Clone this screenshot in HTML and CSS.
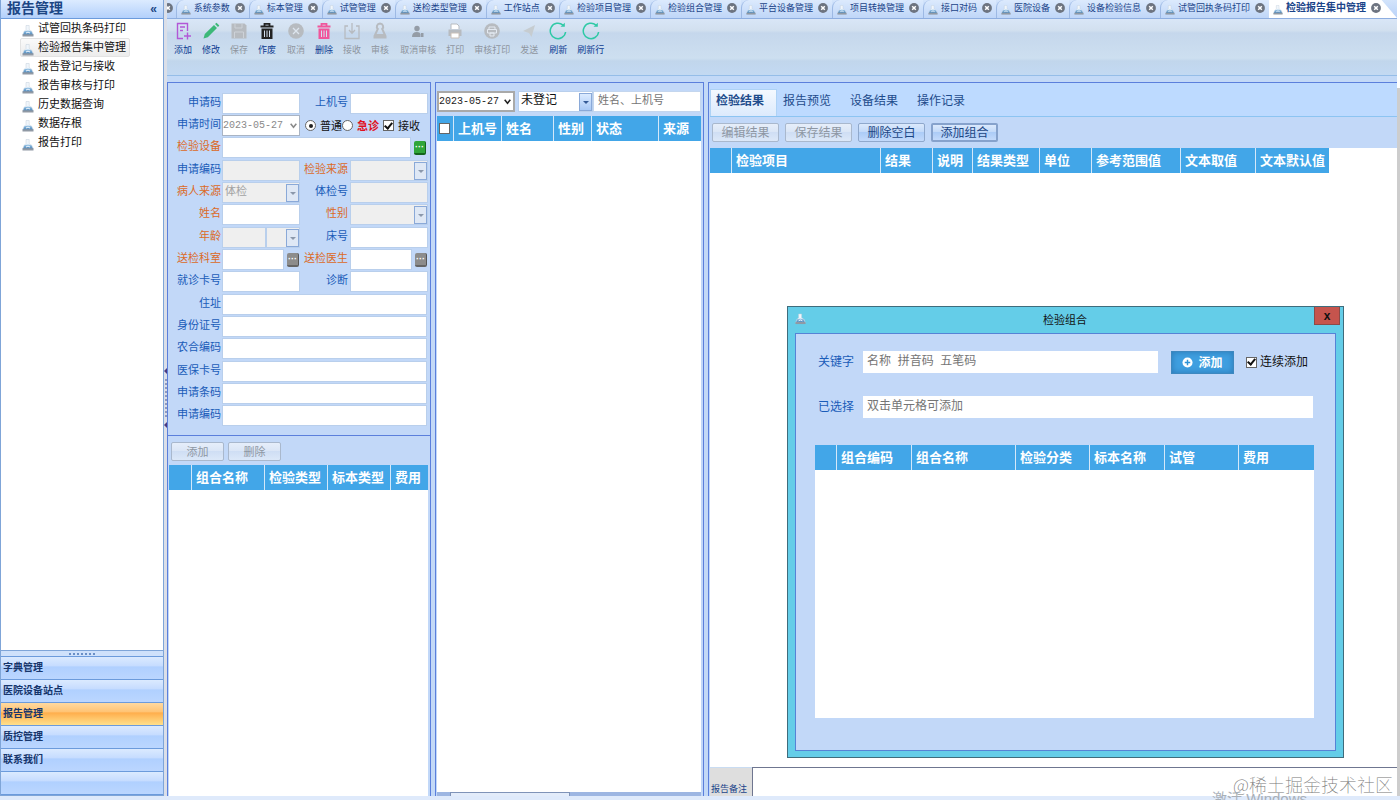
FILE: index.html
```html
<!DOCTYPE html>
<html lang="zh-CN">
<head>
    <meta charset="UTF-8">
    <meta name="viewport" content="width=device-width, initial-scale=1.0">
    <title>检验报告集中管理</title>
    <link rel="stylesheet" href="styles.css">
</head>
<body>
    <!-- shared icons -->
    <svg class="sprite" width="0" height="0">
        <defs>
            <linearGradient id="liquid" x1="0" y1="0" x2="0" y2="1">
                <stop offset="0" stop-color="#a4cdec"/>
                <stop offset="1" stop-color="#4580b4"/>
            </linearGradient>
        </defs>
        <symbol id="flask" viewBox="0 0 12 12">
            <path d="M4 .5h3.200v4L10 6.500 11.300 10H.7L2 6.500l2-2z" fill="#f1f6fb" stroke="#c3cedb" stroke-width=".5"/>
            <path d="M2.300 6.300Q6 4.500 9.500 6.300L11 10H1z" fill="url(#liquid)"/>
            <path d="M.5 9.300h11v2.200H.5z" fill="#9099a4"/>
            <path d="M4 8q2-1.800 4 0" fill="none" stroke="#eef7ff" stroke-width="1"/>
        </symbol>
        <symbol id="close" viewBox="0 0 10 10">
            <circle cx="5" cy="5" r="4.900" fill="#6d7480"/>
            <path d="M3.200 3.200l3.600 3.600M6.800 3.200L3.200 6.800" stroke="#fff" stroke-width="1.500"/>
        </symbol>
        <symbol id="trash" viewBox="0 0 18 18">
            <path d="M2.500 4.500h13M6.500 4V1.800h5V4" fill="none" stroke="currentColor" stroke-width="1.800"/>
            <path d="M3.500 6.500h11V17h-11z" fill="currentColor"/>
            <path d="M6.500 8.500v6.500M9 8.500v6.500M11.500 8.500v6.500" stroke="#d5e1f0" stroke-width="1"/>
        </symbol>
        <symbol id="refresh" viewBox="0 0 18 18">
            <path d="M14 3.100A7.700 7.700 0 1 0 16.600 10" fill="none" stroke="currentColor" stroke-width="1.500"/>
            <path d="M11.500 4.800h4.300V.8z" fill="currentColor"/>
        </symbol>
        <symbol id="chevron" viewBox="0 0 8 8">
            <path d="M1.500 2.500L4 5.500l2.500-3" fill="none" stroke="currentColor" stroke-width="1.400"/>
        </symbol>
    </svg>

    <div class="app">
        <aside class="sidebar">
            <header class="sidebar-title"><span>报告管理</span><button class="collapse" type="button">«</button></header>
            <ul class="tree">
                <li><a href="#"><svg><use href="#flask"/></svg>试管回执条码打印</a></li>
                <li><a href="#" class="selected"><svg><use href="#flask"/></svg>检验报告集中管理</a></li>
                <li><a href="#"><svg><use href="#flask"/></svg>报告登记与接收</a></li>
                <li><a href="#"><svg><use href="#flask"/></svg>报告审核与打印</a></li>
                <li><a href="#"><svg><use href="#flask"/></svg>历史数据查询</a></li>
                <li><a href="#"><svg><use href="#flask"/></svg>数据存根</a></li>
                <li><a href="#"><svg><use href="#flask"/></svg>报告打印</a></li>
            </ul>
            <div class="grip"><i></i></div>
            <nav class="groups">
                <button type="button">字典管理</button>
                <button type="button">医院设备站点</button>
                <button type="button" class="active">报告管理</button>
                <button type="button">质控管理</button>
                <button type="button">联系我们</button>
                <div class="groups-foot"></div>
            </nav>
        </aside>

        <div class="splitter"><b></b><i></i><b></b></div>

        <main class="main">
            <nav class="tabs">
                <span class="tab-cut"><svg><use href="#close"/></svg></span>
                <a href="#" class="tab"><svg><use href="#flask"/></svg>系统参数<svg class="x"><use href="#close"/></svg></a>
                <a href="#" class="tab"><svg><use href="#flask"/></svg>标本管理<svg class="x"><use href="#close"/></svg></a>
                <a href="#" class="tab"><svg><use href="#flask"/></svg>试管管理<svg class="x"><use href="#close"/></svg></a>
                <a href="#" class="tab"><svg><use href="#flask"/></svg>送检类型管理<svg class="x"><use href="#close"/></svg></a>
                <a href="#" class="tab"><svg><use href="#flask"/></svg>工作站点<svg class="x"><use href="#close"/></svg></a>
                <a href="#" class="tab"><svg><use href="#flask"/></svg>检验项目管理<svg class="x"><use href="#close"/></svg></a>
                <a href="#" class="tab"><svg><use href="#flask"/></svg>检验组合管理<svg class="x"><use href="#close"/></svg></a>
                <a href="#" class="tab"><svg><use href="#flask"/></svg>平台设备管理<svg class="x"><use href="#close"/></svg></a>
                <a href="#" class="tab"><svg><use href="#flask"/></svg>项目转换管理<svg class="x"><use href="#close"/></svg></a>
                <a href="#" class="tab"><svg><use href="#flask"/></svg>接口对码<svg class="x"><use href="#close"/></svg></a>
                <a href="#" class="tab"><svg><use href="#flask"/></svg>医院设备<svg class="x"><use href="#close"/></svg></a>
                <a href="#" class="tab"><svg><use href="#flask"/></svg>设备检验信息<svg class="x"><use href="#close"/></svg></a>
                <a href="#" class="tab"><svg><use href="#flask"/></svg>试管回执条码打印<svg class="x"><use href="#close"/></svg></a>
                <a href="#" class="tab current"><svg><use href="#flask"/></svg>检验报告集中管理<svg class="x"><use href="#close"/></svg></a>
            </nav>

            <div class="toolbar">
                <div class="tool-group">
                    <button type="button"><svg class="purple" viewBox="0 0 18 18"><path d="M9 16.500H3.500v-15h10V9M6 5h5M6 8.500h3M13.500 10.500v7M10 14h7" fill="none" stroke="currentColor" stroke-width="1.400"/></svg>添加</button>
                    <button type="button"><svg class="green" viewBox="0 0 18 18"><path d="M1.500 16.500l1.300-4.500L12 3l3 3-9.200 9.200zM13 2l1.500-1.300 2.800 2.800L16 5z" fill="currentColor"/></svg>修改</button>
                    <button type="button" disabled><svg viewBox="0 0 18 18"><path d="M1.500 1.500h13l2 2v13h-15z" fill="currentColor"/><path d="M5 2v4h7V2M4.500 16v-6h9v6" fill="none" stroke="#cdd2d8" stroke-width="1"/></svg>保存</button>
                    <button type="button"><svg class="black"><use href="#trash"/></svg>作废</button>
                </div>
                <div class="tool-group">
                    <button type="button" disabled><svg viewBox="0 0 18 18"><circle cx="9" cy="9" r="7.800" fill="currentColor"/><path d="M6 6l6 6M12 6l-6 6" stroke="#dde5ee" stroke-width="1.300"/></svg>取消</button>
                    <button type="button"><svg class="pink"><use href="#trash"/></svg>删除</button>
                    <button type="button" disabled><svg viewBox="0 0 18 18"><path d="M5 4H2v12.500h14V4h-3M9 1v10M6 8l3 3.200L12 8" fill="none" stroke="currentColor" stroke-width="1.300"/></svg>接收</button>
                    <button type="button" disabled><svg viewBox="0 0 18 18"><path d="M9 1.500a3.200 3.200 0 0 1 2.200 5.500L14 13H4l2.800-6A3.200 3.200 0 0 1 9 1.500z" fill="none" stroke="currentColor" stroke-width="2"/><path d="M2.500 14h13v2.500h-13z" fill="currentColor"/></svg>审核</button>
                </div>
                <div class="tool-group">
                    <button type="button" disabled><svg class="dark" viewBox="0 0 18 18"><circle cx="8" cy="6.500" r="2.700" fill="currentColor"/><path d="M3 15q0-5 5-5 3 0 3.500 2v3zM12 11h2.500v4H12z" fill="currentColor"/></svg>取消审核</button>
                    <button type="button" disabled><svg viewBox="0 0 18 18"><path d="M5 7V2h6l2 2v3" fill="#fff" stroke="currentColor"/><path d="M2.500 7.500h13V14h-13z" fill="currentColor"/><path d="M5 11h8v5H5z" fill="#fff" stroke="#c9bfb8"/></svg>打印</button>
                    <button type="button" disabled><svg viewBox="0 0 18 18"><circle cx="9" cy="9" r="7.800" fill="currentColor"/><path d="M6 7V5h6v2M4.500 7.500h9V11h-9zM7 11h4v3H7z" fill="none" stroke="#e4eaf2"/></svg>审核打印</button>
                    <button type="button" disabled><svg class="pale" viewBox="0 0 18 18"><path d="M3 9l12-6-3.500 12-2.500-4zM8 11l5-6" fill="currentColor"/></svg>发送</button>
                </div>
                <div class="tool-group">
                    <button type="button"><svg class="teal"><use href="#refresh"/></svg>刷新</button>
                    <button type="button"><svg class="teal"><use href="#refresh"/></svg>刷新行</button>
                </div>
            </div>

            <div class="workspace">
                <!-- request form -->
                <section class="panel request">
                    <form class="form">
                        <div class="rows">
                            <div class="row">
                                <label for="code">申请码</label><input id="code" type="text">
                                <label for="machine">上机号</label><input id="machine" type="text">
                            </div>
                            <div class="row">
                                <label for="time">申请时间</label>
                                <span class="date off"><input id="time" type="text" value="2023-05-27" disabled><svg><use href="#chevron"/></svg></span>
                                <span class="marks">
                                    <label><input type="radio" name="urgency" checked>普通</label>
                                    <label class="urgent"><input type="radio" name="urgency">急诊</label>
                                    <label><input type="checkbox" checked>接收</label>
                                </span>
                            </div>
                            <div class="row wide">
                                <label class="must" for="device">检验设备</label>
                                <span class="lookup"><input id="device" type="text"><button type="button" class="more on" aria-label="选择">···</button></span>
                            </div>
                        </div>
                        <div class="rows">
                            <div class="row">
                                <label for="apply1">申请编码</label><input id="apply1" type="text" disabled>
                                <label class="must" for="source">检验来源</label><span class="combo off"><select id="source" disabled></select></span>
                            </div>
                            <div class="row">
                                <label class="must" for="patient">病人来源</label><span class="combo off"><select id="patient" disabled><option>体检</option></select></span>
                                <label for="exam">体检号</label><input id="exam" type="text" disabled>
                            </div>
                            <div class="row">
                                <label class="must" for="name">姓名</label><input id="name" type="text">
                                <label class="must" for="sex">性别</label><span class="combo off"><select id="sex" disabled></select></span>
                            </div>
                        </div>
                        <div class="rows">
                            <div class="row">
                                <label class="must" for="age">年龄</label>
                                <span class="age"><input id="age" type="text" disabled><span class="combo off"><select aria-label="年龄" disabled></select></span></span>
                                <label for="bed">床号</label><input id="bed" type="text">
                            </div>
                            <div class="row">
                                <label class="must" for="dept">送检科室</label><span class="lookup"><input id="dept" type="text"><button type="button" class="more" aria-label="选择">···</button></span>
                                <label class="must" for="doctor">送检医生</label><span class="lookup"><input id="doctor" type="text"><button type="button" class="more" aria-label="选择">···</button></span>
                            </div>
                            <div class="row">
                                <label for="card">就诊卡号</label><input id="card" type="text">
                                <label for="diag">诊断</label><input id="diag" type="text">
                            </div>
                        </div>
                        <div class="rows">
                            <div class="row wide"><label for="addr">住址</label><input id="addr" type="text"></div>
                            <div class="row wide"><label for="idno">身份证号</label><input id="idno" type="text"></div>
                            <div class="row wide"><label for="rural">农合编码</label><input id="rural" type="text"></div>
                        </div>
                        <div class="rows">
                            <div class="row wide"><label for="insure">医保卡号</label><input id="insure" type="text"></div>
                            <div class="row wide"><label for="barcode">申请条码</label><input id="barcode" type="text"></div>
                            <div class="row wide"><label for="apply2">申请编码</label><input id="apply2" type="text"></div>
                        </div>
                    </form>
                    <div class="combos">
                        <div class="combo-buttons">
                            <button type="button" class="btn" disabled>添加</button>
                            <button type="button" class="btn" disabled>删除</button>
                        </div>
                        <div class="sheet">
                            <table class="grid grid-combos">
                                <thead><tr><th></th><th>组合名称</th><th>检验类型</th><th>标本类型</th><th>费用</th></tr></thead>
                            </table>
                        </div>
                    </div>
                </section>

                <!-- patient list -->
                <section class="panel queue">
                    <div class="filters">
                        <span class="date"><input type="text" value="2023-05-27" aria-label="日期"><svg><use href="#chevron"/></svg></span>
                        <span class="combo"><select aria-label="状态"><option>未登记</option></select></span>
                        <input type="text" placeholder="姓名、上机号" aria-label="姓名、上机号">
                    </div>
                    <div class="sheet">
                        <table class="grid grid-queue">
                            <thead><tr><th><input type="checkbox" aria-label="全选"></th><th>上机号</th><th>姓名</th><th>性别</th><th>状态</th><th>来源</th></tr></thead>
                        </table>
                    </div>
                    <div class="hscroll"><i></i></div>
                </section>

                <!-- results -->
                <section class="panel results">
                    <nav class="subtabs">
                        <a href="#" class="current">检验结果</a>
                        <a href="#">报告预览</a>
                        <a href="#">设备结果</a>
                        <a href="#">操作记录</a>
                    </nav>
                    <div class="actions">
                        <button type="button" class="btn" disabled>编辑结果</button>
                        <button type="button" class="btn" disabled>保存结果</button>
                        <button type="button" class="btn">删除空白</button>
                        <button type="button" class="btn focus">添加组合</button>
                    </div>
                    <div class="sheet">
                        <table class="grid grid-results">
                            <thead><tr><th></th><th>检验项目</th><th>结果</th><th>说明</th><th>结果类型</th><th>单位</th><th>参考范围值</th><th>文本取值</th><th>文本默认值</th></tr></thead>
                        </table>
                    </div>
                    <div class="remark">
                        <label for="remark">报告备注</label>
                        <textarea id="remark"></textarea>
                    </div>
                </section>
            </div>
        </main>
        <div class="edge"></div>
    </div>
    <footer class="status"></footer>

    <div class="dialog" role="dialog" aria-labelledby="dialog-title">
        <header class="dialog-bar">
            <svg><use href="#flask"/></svg>
            <h2 id="dialog-title">检验组合</h2>
            <button type="button" class="dialog-close">x</button>
        </header>
        <div class="dialog-body">
            <div class="line">
                <label for="keyword">关键字</label>
                <input id="keyword" type="text" placeholder="名称  拼音码  五笔码">
                <button type="button" class="add"><svg viewBox="0 0 12 12"><circle cx="6" cy="6" r="5.500" fill="#fff"/><path d="M6 3v6M3 6h6" stroke="#2f93d6" stroke-width="1.600"/></svg>添加</button>
                <label class="again"><input type="checkbox" checked>连续添加</label>
            </div>
            <div class="line">
                <label for="picked">已选择</label>
                <input id="picked" type="text" placeholder="双击单元格可添加">
            </div>
            <div class="sheet">
                <table class="grid grid-dialog">
                    <thead><tr><th></th><th>组合编码</th><th>组合名称</th><th>检验分类</th><th>标本名称</th><th>试管</th><th>费用</th></tr></thead>
                </table>
            </div>
        </div>
    </div>

    <div class="watermark">@稀土掘金技术社区</div>
    <div class="activate">激活 Windows</div>
</body>
</html>
```

FILE: styles.css
```css
* {
    box-sizing: border-box;
}
body {
    margin: 0;
    height: 100vh;
    display: flex;
    flex-direction: column;
    overflow: hidden;
    position: relative;
    background: #dfeafb;
    color: #111;
    font-family: "Liberation Sans", "Noto Sans CJK SC", sans-serif;
    font-size: 11px;
}
input, select, button, textarea {
    margin: 0;
    padding: 0;
    border: 0;
    border-radius: 0;
    font: inherit;
    color: inherit;
    background: none;
    outline: none;
}
a {
    color: inherit;
    text-decoration: none;
}
.sprite {
    position: absolute;
}
.app {
    flex: 1;
    min-height: 0;
    display: flex;
    background: #fff;
}
.status {
    height: 4px;
    background: #dfeafb;
}
.edge {
    width: 3px;
    margin-top: 88px;
    background: #cdcdcd;
}

/* sidebar */
.sidebar {
    width: 164px;
    display: flex;
    flex-direction: column;
    border: 1px solid #7fa5d8;
    border-top: 0;
    background: #fff;
}
.sidebar-title {
    height: 19px;
    padding: 0 6px;
    display: flex;
    justify-content: space-between;
    border-bottom: 1px solid #6c9bdc;
    background: linear-gradient(#dcebff, #b3d0fb);
    color: #1c4684;
    font-size: 14px;
    font-weight: bold;
    line-height: 16px;
}
.collapse {
    font-size: 12px;
    font-weight: bold;
}
.tree {
    flex: 1;
    margin: 0;
    padding: 0 0 0 19px;
    list-style: none;
}
.tree li {
    height: 19px;
}
.tree a {
    display: inline-flex;
    align-items: center;
    gap: 4px;
    height: 19px;
    padding: 0 3px 0 1px;
    border: 1px solid transparent;
    line-height: 17px;
}
.tree a.selected {
    border-color: #e3e3e3;
    border-radius: 2px;
    background: linear-gradient(#fafafa, #ececec);
}
.tree svg {
    width: 12px;
    height: 12px;
    margin-top: 4px;
}
.grip {
    height: 6px;
    display: flex;
    justify-content: center;
    align-items: center;
    border-top: 1px solid #7fa5d8;
    background: #cfe1fb;
}
.grip i {
    width: 26px;
    border-top: 2px dotted #6a8fc6;
}
.groups button, .groups-foot {
    display: block;
    width: 100%;
    height: 23px;
    padding: 0 2px;
    border-top: 1px solid #6c9bdc;
    background: linear-gradient(#dbeaff 0, #c6dcff 40%, #b0d0ff 45%, #bbd6ff 100%);
    color: #16356b;
    font-size: 10px;
    font-weight: bold;
    line-height: 20px;
    text-align: left;
}
.groups button.active {
    background: linear-gradient(#ffd9a0 0, #ffc374 40%, #ffae4c 45%, #ffe08c 100%);
}
.groups-foot {
    height: 24px;
    border-bottom: 1px solid #6c9bdc;
}
.splitter {
    width: 3px;
    display: flex;
    flex-direction: column;
    align-items: center;
    justify-content: center;
    gap: 5px;
    background: #dbdfe8;
}
.splitter b {
    border: 3px solid transparent;
    border-left: 0;
    border-right-color: #4a3a80;
}
.splitter i {
    height: 38px;
    border-left: 2px dotted #8f9ac0;
}

/* document tabs */
.main {
    flex: 1;
    min-width: 0;
    display: flex;
    flex-direction: column;
    background: #c3d9f7;
}
.tabs {
    height: 19px;
    display: flex;
    overflow: hidden;
    border-bottom: 1px solid #8eaee0;
    background: linear-gradient(#d3e4fb, #b9d2f8);
}
.tab-cut {
    width: 9px;
    padding-top: 3px;
    overflow: hidden;
}
.tab-cut svg, .tab svg.x {
    width: 10px;
    height: 10px;
    margin: 1px 0 0 5px;
}
.tab-cut svg {
    margin: 0 0 0 -4px;
}
.tab {
    flex: none;
    display: flex;
    align-items: center;
    height: 18px;
    padding: 0 4px 3px;
    border-left: 1px solid #9db9e4;
    border-radius: 8px 0 0 0;
    background: linear-gradient(#dceafd, #bfd6f8);
    color: #1b4489;
    font-size: 9px;
    line-height: 14px;
}
.tab svg {
    width: 10px;
    height: 10px;
    margin: 5px 3px 0 0;
}
.tab.current {
    padding-right: 16px;
    border: 0;
    border-radius: 0;
    background: #fff;
    clip-path: polygon(0 0, 88% 0, 100% 100%, 0 100%);
    font-size: 10px;
    font-weight: bold;
}

/* toolbar */
.toolbar {
    height: 57px;
    padding: 3px 7px 0;
    display: flex;
    gap: 11px;
    border-bottom: 1px solid #95bde8;
    background: linear-gradient(#d9e6f7 0, #d2e0ef 20%, #c5d7ec 25%, #cddff0 70%, #c1d6ec 75%, #c3d9f2 100%);
}
.tool-group {
    display: flex;
    gap: 10px;
}
.toolbar button {
    display: flex;
    flex-direction: column;
    align-items: center;
    height: 40px;
    color: #0d3b91;
    font-size: 9px;
    line-height: 20px;
}
.toolbar button:disabled {
    color: #8e959e;
}
.toolbar svg {
    width: 18px;
    height: 18px;
    color: #b7bbc0;
}
.toolbar .purple { color: #b257d6; }
.toolbar .green { color: #3cb878; }
.toolbar .black { color: #222; }
.toolbar .pink { color: #f0569c; }
.toolbar .dark { color: #949ca6; }
.toolbar .pale { color: #c6ccd0; }
.toolbar .teal { color: #2fc9a6; }

/* panels */
.workspace {
    flex: 1;
    min-height: 0;
    padding-top: 6px;
    display: flex;
    gap: 4px;
}
.panel {
    display: flex;
    flex-direction: column;
    border: 1px solid #5b7fdc;
    border-bottom: 0;
    background: #c2d8f8;
}
.sheet {
    flex: 1;
    background: #fff;
}
.grid {
    border-collapse: separate;
    border-spacing: 0;
    table-layout: fixed;
    width: 0;
}
.grid th {
    height: 25px;
    padding: 0 0 0 4px;
    overflow: hidden;
    border-right: 1px solid #d4e8f9;
    background: #42a6e8;
    color: #fff;
    font-size: 13px;
    font-weight: bold;
    line-height: 24px;
    text-align: left;
    white-space: nowrap;
}
.grid th:last-child {
    border-right: 0;
}
.btn {
    height: 19px;
    border: 1px solid #8fa8cc;
    border-radius: 2px;
    background: linear-gradient(#dbe9fc 0, #c3daf9 45%, #acccf7 50%, #c3dafb 100%);
    color: #1c4684;
    font-size: 12px;
    line-height: 14px;
}
.btn:disabled {
    border-color: #a9b8cd;
    background: linear-gradient(#e6eefa 0, #dbe6f6 45%, #cfdef4 50%, #dce8f8 100%);
    color: #8e97a3;
}
.btn.focus {
    border: 2px solid #86a2cc;
}

/* request form */
.request {
    width: 264px;
}
.form {
    padding: 10px 2px 9px;
    display: flex;
    flex-direction: column;
    gap: 2px;
    border-bottom: 1px solid #5b7fdc;
}
.rows {
    display: flex;
    flex-direction: column;
    gap: 1px;
}
.row {
    display: grid;
    grid-template-columns: 52px 78px 50px 78px;
    height: 21px;
    align-items: stretch;
    color: #1a5cb8;
}
.row.wide {
    grid-template-columns: 52px 205px;
}
.row > label {
    padding-right: 1px;
    line-height: 18px;
    text-align: right;
}
.row > label:nth-child(3) {
    padding-right: 2px;
}
.row .must {
    color: #dc6a26;
}
.row > input, .lookup input, .age > input {
    width: 100%;
    min-width: 0;
    border: 1px solid #b9cfec;
    background: #fff;
}
.row > input:disabled, .age > input:disabled {
    background: #efefef;
}
.row .lookup, .age {
    display: flex;
}
.more {
    flex: none;
    width: 12px;
    height: 14px;
    margin: 4px 1px 0 3px;
    border-radius: 2px;
    border-right: 1px solid #555;
    border-bottom: 2px solid #666;
    background: #8c8c8c;
    color: #fff;
    font-size: 9px;
    font-weight: bold;
    line-height: 12px;
}
.more.on {
    border-color: #14651d;
    background: #2fa53a;
}
.row .date, .filters .date {
    display: flex;
    align-items: center;
    border: 1px solid #a9b4c4;
    background: #fff;
    color: #222;
}
.date input {
    flex: 1;
    min-width: 0;
    font-family: "Liberation Mono", monospace;
    font-size: 10px;
}
.date svg {
    flex: none;
    width: 9px;
    height: 9px;
    margin-right: 1px;
}
.row .date.off {
    color: #8a8a8a;
}
.row .marks {
    grid-column: 3 / 5;
    display: flex;
    gap: 4px;
    padding-left: 5px;
    color: #111;
    white-space: nowrap;
}
.marks label {
    display: flex;
    align-items: center;
    gap: 4px;
    line-height: 18px;
}
.marks .urgent {
    margin-left: -4px;
    color: #e0101e;
    font-weight: bold;
}
.marks input {
    width: 10px;
    height: 10px;
}
input[type="radio"], input[type="checkbox"] {
    appearance: none;
    flex: none;
    display: inline-grid;
    place-content: center;
    width: 11px;
    height: 11px;
    border: 1px solid #666;
    background: #fff;
}
input[type="radio"] {
    border-radius: 50%;
}
input[type="radio"]:checked::before {
    content: "";
    width: 4px;
    height: 4px;
    border-radius: 50%;
    background: #222;
}
input[type="checkbox"]:checked::before {
    content: "";
    width: 3px;
    height: 6px;
    margin-bottom: 2px;
    border: solid #111;
    border-width: 0 2px 2px 0;
    transform: rotate(40deg);
}
.combo {
    position: relative;
    display: flex;
    flex: 1;
    min-width: 0;
    border: 1px solid #b9cfec;
    background: #fff;
    color: #111;
}
.combo select {
    appearance: none;
    width: 100%;
    padding: 0 0 3px 2px;
    opacity: 1;
}
.combo::before {
    content: "";
    position: absolute;
    top: 1px;
    right: 0;
    bottom: 0;
    width: 11px;
    border: 1px solid #8aa9d8;
    background: linear-gradient(#dcebff, #a9c9f5);
    pointer-events: none;
}
.combo::after {
    content: "";
    position: absolute;
    right: 3px;
    top: 9px;
    border: 3px solid transparent;
    border-top-color: #345a96;
    border-bottom: 0;
    pointer-events: none;
}
.combo.off {
    background: #efefef;
    color: #a2a2a2;
}
.combo.off::before {
    background: #dfe8f5;
}
.combo.off::after {
    border-top-color: #8b98ab;
}
.age > input {
    flex: 0 0 44px;
}

.combos {
    flex: 1;
    display: flex;
    flex-direction: column;
    padding: 0 2px 0 1px;
}
.combo-buttons {
    display: flex;
    gap: 4px;
    padding: 6px 2px 4px;
}
.combo-buttons .btn {
    width: 53px;
    font-size: 11px;
}
.grid-combos th:nth-child(1) { width: 23px; }
.grid-combos th:nth-child(2) { width: 73px; }
.grid-combos th:nth-child(3) { width: 63px; }
.grid-combos th:nth-child(4) { width: 63px; }
.grid-combos th:nth-child(5) { width: 37px; }

/* patient list */
.queue {
    width: 269px;
    padding: 0 2px 0 1px;
}
.filters {
    display: flex;
    height: 33px;
    padding: 8px 0 4px;
}
.filters .date {
    width: 78px;
    margin-right: 3px;
    border: 2px solid #a9a9a9;
}
.filters .combo {
    flex: none;
    width: 75px;
    font-size: 12px;
}
.filters > input {
    flex: 1;
    min-width: 0;
    padding: 0 0 3px 4px;
    border: 1px solid #c4d6ee;
    background: #fff;
}
::placeholder {
    color: #757575;
    opacity: 1;
}
.grid-queue th:nth-child(1) { width: 17px; padding: 0 2px; line-height: 0; }
.grid-queue th:nth-child(2) { width: 48px; }
.grid-queue th:nth-child(3) { width: 52px; }
.grid-queue th:nth-child(4) { width: 38px; }
.grid-queue th:nth-child(5) { width: 67px; }
.grid-queue th:nth-child(6) { width: 42px; }
.hscroll {
    height: 4px;
    background: #9db6e2;
}
.hscroll i {
    display: block;
    width: 120px;
    height: 4px;
    margin-left: 13px;
    border: 1px solid #7f93b8;
    border-bottom: 0;
    background: #e3ecfa;
}

/* results */
.results {
    flex: 1;
    min-width: 0;
    padding-left: 1px;
    border-right: 0;
}
.subtabs {
    height: 34px;
    padding-top: 6px;
    display: flex;
    border-bottom: 1px solid #8cc4f2;
    background: #bddaff;
    color: #1f4c8c;
    font-size: 12px;
    line-height: 24px;
}
.subtabs a {
    width: 67px;
    padding-left: 6px;
    white-space: nowrap;
}
.subtabs .current {
    padding-left: 5px;
    border: 1px solid #aed2f5;
    border-bottom: 0;
    background: linear-gradient(#f4f9ff, #dceafc);
    font-weight: bold;
    line-height: 22px;
}
.actions {
    display: flex;
    gap: 6px;
    padding: 6px 2px;
}
.actions .btn {
    width: 67px;
}
.grid-results th:nth-child(1) { width: 22px; }
.grid-results th:nth-child(2) { width: 149px; }
.grid-results th:nth-child(3) { width: 52px; }
.grid-results th:nth-child(4) { width: 40px; }
.grid-results th:nth-child(5) { width: 67px; }
.grid-results th:nth-child(6) { width: 52px; }
.grid-results th:nth-child(7) { width: 89px; }
.grid-results th:nth-child(8) { width: 75px; }
.grid-results th:nth-child(9) { width: 73px; }
.remark {
    height: 29px;
    display: flex;
}
.remark label {
    width: 42px;
    padding: 12px 0 0 1px;
    border-top: 1px solid #c9dcf2;
    background: #dedede;
    color: #1b4489;
    font-size: 9px;
    line-height: 18px;
    white-space: nowrap;
}
.remark textarea {
    flex: 1;
    border: solid #6f7690;
    border-width: 1px 0 0 1px;
    background: #fff;
    resize: none;
}

/* floating dialog */
.dialog {
    position: absolute;
    top: 306px;
    right: 56px;
    width: 557px;
    padding: 0 7px 6px;
    border: 1px solid #3f6c7c;
    background: #64cde8;
}
.dialog-bar {
    display: flex;
    height: 26px;
}
.dialog-bar svg {
    width: 11px;
    height: 12px;
    margin-top: 6px;
}
.dialog-bar h2 {
    flex: 1;
    margin: 0;
    padding-left: 10px;
    font-size: 11px;
    font-weight: normal;
    line-height: 26px;
    text-align: center;
}
.dialog-close {
    width: 26px;
    height: 18px;
    margin-right: -4px;
    border: 1px solid #8c4a48;
    border-top: 0;
    background: #c6544d;
    font-size: 12px;
    font-weight: bold;
    line-height: 14px;
}
.dialog-body {
    height: 418px;
    padding: 17px 21px 32px 19px;
    display: flex;
    flex-direction: column;
    border: 1px solid #5583d6;
    background: #c2d8f8;
}
.line {
    display: flex;
    height: 22px;
    margin-bottom: 23px;
    padding-right: 1px;
    color: #1a5cb8;
    font-size: 12px;
    line-height: 22px;
}
.line > label:first-child {
    width: 48px;
    padding-left: 3px;
}
.line > input {
    flex: 1;
    min-width: 0;
    padding: 0 4px 3px;
    background: #fff;
    color: #111;
    white-space: pre;
}
.line + .line {
    margin-bottom: 27px;
}
.add {
    width: 63px;
    height: 23px;
    margin: 0 12px 0 13px;
    display: flex;
    align-items: center;
    justify-content: center;
    gap: 5px;
    border: 1px solid #3d88c0;
    background: #3f9fe0;
    color: #fff;
    font-weight: bold;
    box-shadow: inset 0 0 6px #2b78b4;
}
.add svg {
    width: 11px;
    height: 11px;
}
.again {
    display: flex;
    align-items: center;
    gap: 3px;
    margin-right: 5px;
    color: #111;
}
.grid-dialog th:nth-child(1) { width: 22px; }
.grid-dialog th:nth-child(2) { width: 75px; }
.grid-dialog th:nth-child(3) { width: 104px; }
.grid-dialog th:nth-child(4) { width: 74px; }
.grid-dialog th:nth-child(5) { width: 75px; }
.grid-dialog th:nth-child(6) { width: 74px; }
.grid-dialog th:nth-child(7) { width: 75px; }

.watermark {
    position: absolute;
    right: 7px;
    bottom: 4px;
    color: #777;
    font-family: "Noto Sans CJK SC", sans-serif;
    font-size: 18px;
    font-weight: 100;
    line-height: 24px;
}
.activate {
    position: absolute;
    right: 93px;
    bottom: -9px;
    color: #a9b0b8;
    font-size: 15px;
    line-height: 20px;
}
```
